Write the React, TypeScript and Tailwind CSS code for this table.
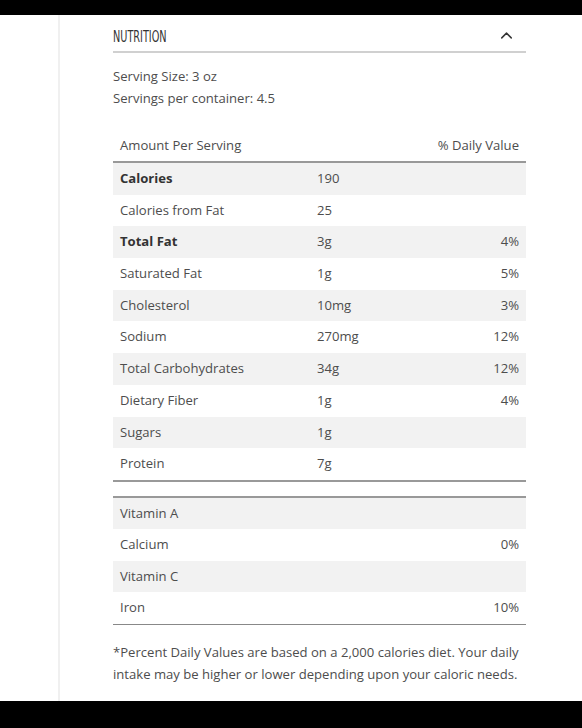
import { ChevronUp } from 'lucide-react';

const nutrients = [
  { name: 'Calories', amount: '190', dv: '', bold: true },
  { name: 'Calories from Fat', amount: '25', dv: '' },
  { name: 'Total Fat', amount: '3g', dv: '4%', bold: true },
  { name: 'Saturated Fat', amount: '1g', dv: '5%' },
  { name: 'Cholesterol', amount: '10mg', dv: '3%' },
  { name: 'Sodium', amount: '270mg', dv: '12%' },
  { name: 'Total Carbohydrates', amount: '34g', dv: '12%' },
  { name: 'Dietary Fiber', amount: '1g', dv: '4%' },
  { name: 'Sugars', amount: '1g', dv: '' },
  { name: 'Protein', amount: '7g', dv: '' },
];

const vitamins = [
  { name: 'Vitamin A', dv: '' },
  { name: 'Calcium', dv: '0%' },
  { name: 'Vitamin C', dv: '' },
  { name: 'Iron', dv: '10%' },
];

export default function App() {
  return (
    <main className="h-[728px] flex flex-col bg-black font-['Open_Sans',sans-serif] text-[13.1px] text-[#4d4d4d]">
      <div className="h-[15px] shrink-0" />
      <div className="flex-1 flex bg-white overflow-hidden">
        <div className="w-[58px] shrink-0" />
        <div className="w-[2px] shrink-0 bg-[#f0f0f0]" />
        <section className="w-[413px] ml-[53px] pt-[10px]">
          <div className="flex items-center justify-between h-[28px] border-b-2 border-[#d0d0d0] pb-[2px]">
            <h2 className="font-['DejaVu_Sans_Condensed',sans-serif] text-[15px] font-normal text-[#333] scale-x-[0.72] origin-left">
              NUTRITION
            </h2>
            <ChevronUp className="w-[19px] h-[19px] mr-[10px] mt-[-3px] text-[#333]" strokeWidth={1.8} />
          </div>

          <div className="pt-[12px] leading-[22px]">
            <p>Serving Size: 3 oz</p>
            <p>Servings per container: 4.5</p>
          </div>

          <div className="mt-[20px] h-[34px] flex items-center justify-between px-[7px] pt-[2px] border-b-2 border-[#999]">
            <span>Amount Per Serving</span>
            <span>% Daily Value</span>
          </div>

          {nutrients.map((n, i) => (
            <div key={n.name} className={`h-[31.7px] flex items-center px-[7px] ${i % 2 === 0 ? 'bg-[#f2f2f2]' : ''}`}>
              <span className={`w-[197px] ${n.bold ? 'font-bold text-[#333]' : ''}`}>{n.name}</span>
              <span className="flex-1">{n.amount}</span>
              <span>{n.dv}</span>
            </div>
          ))}

          <div className="border-t-2 border-[#999]" />

          <div className="mt-[14px] border-t-2 border-[#999]">
            {vitamins.map((v, i) => (
              <div key={v.name} className={`h-[31.5px] flex items-center justify-between px-[7px] ${i % 2 === 0 ? 'bg-[#f2f2f2]' : ''}`}>
                <span>{v.name}</span>
                <span>{v.dv}</span>
              </div>
            ))}
          </div>
          <div className="border-t border-[#888]" />

          <p className="mt-[16px] leading-[22px]">
            *Percent Daily Values are based on a 2,000 calories diet. Your daily intake may be higher or lower depending upon your caloric needs.
          </p>
        </section>
      </div>
      <div className="h-[27px] shrink-0" />
    </main>
  );
}
